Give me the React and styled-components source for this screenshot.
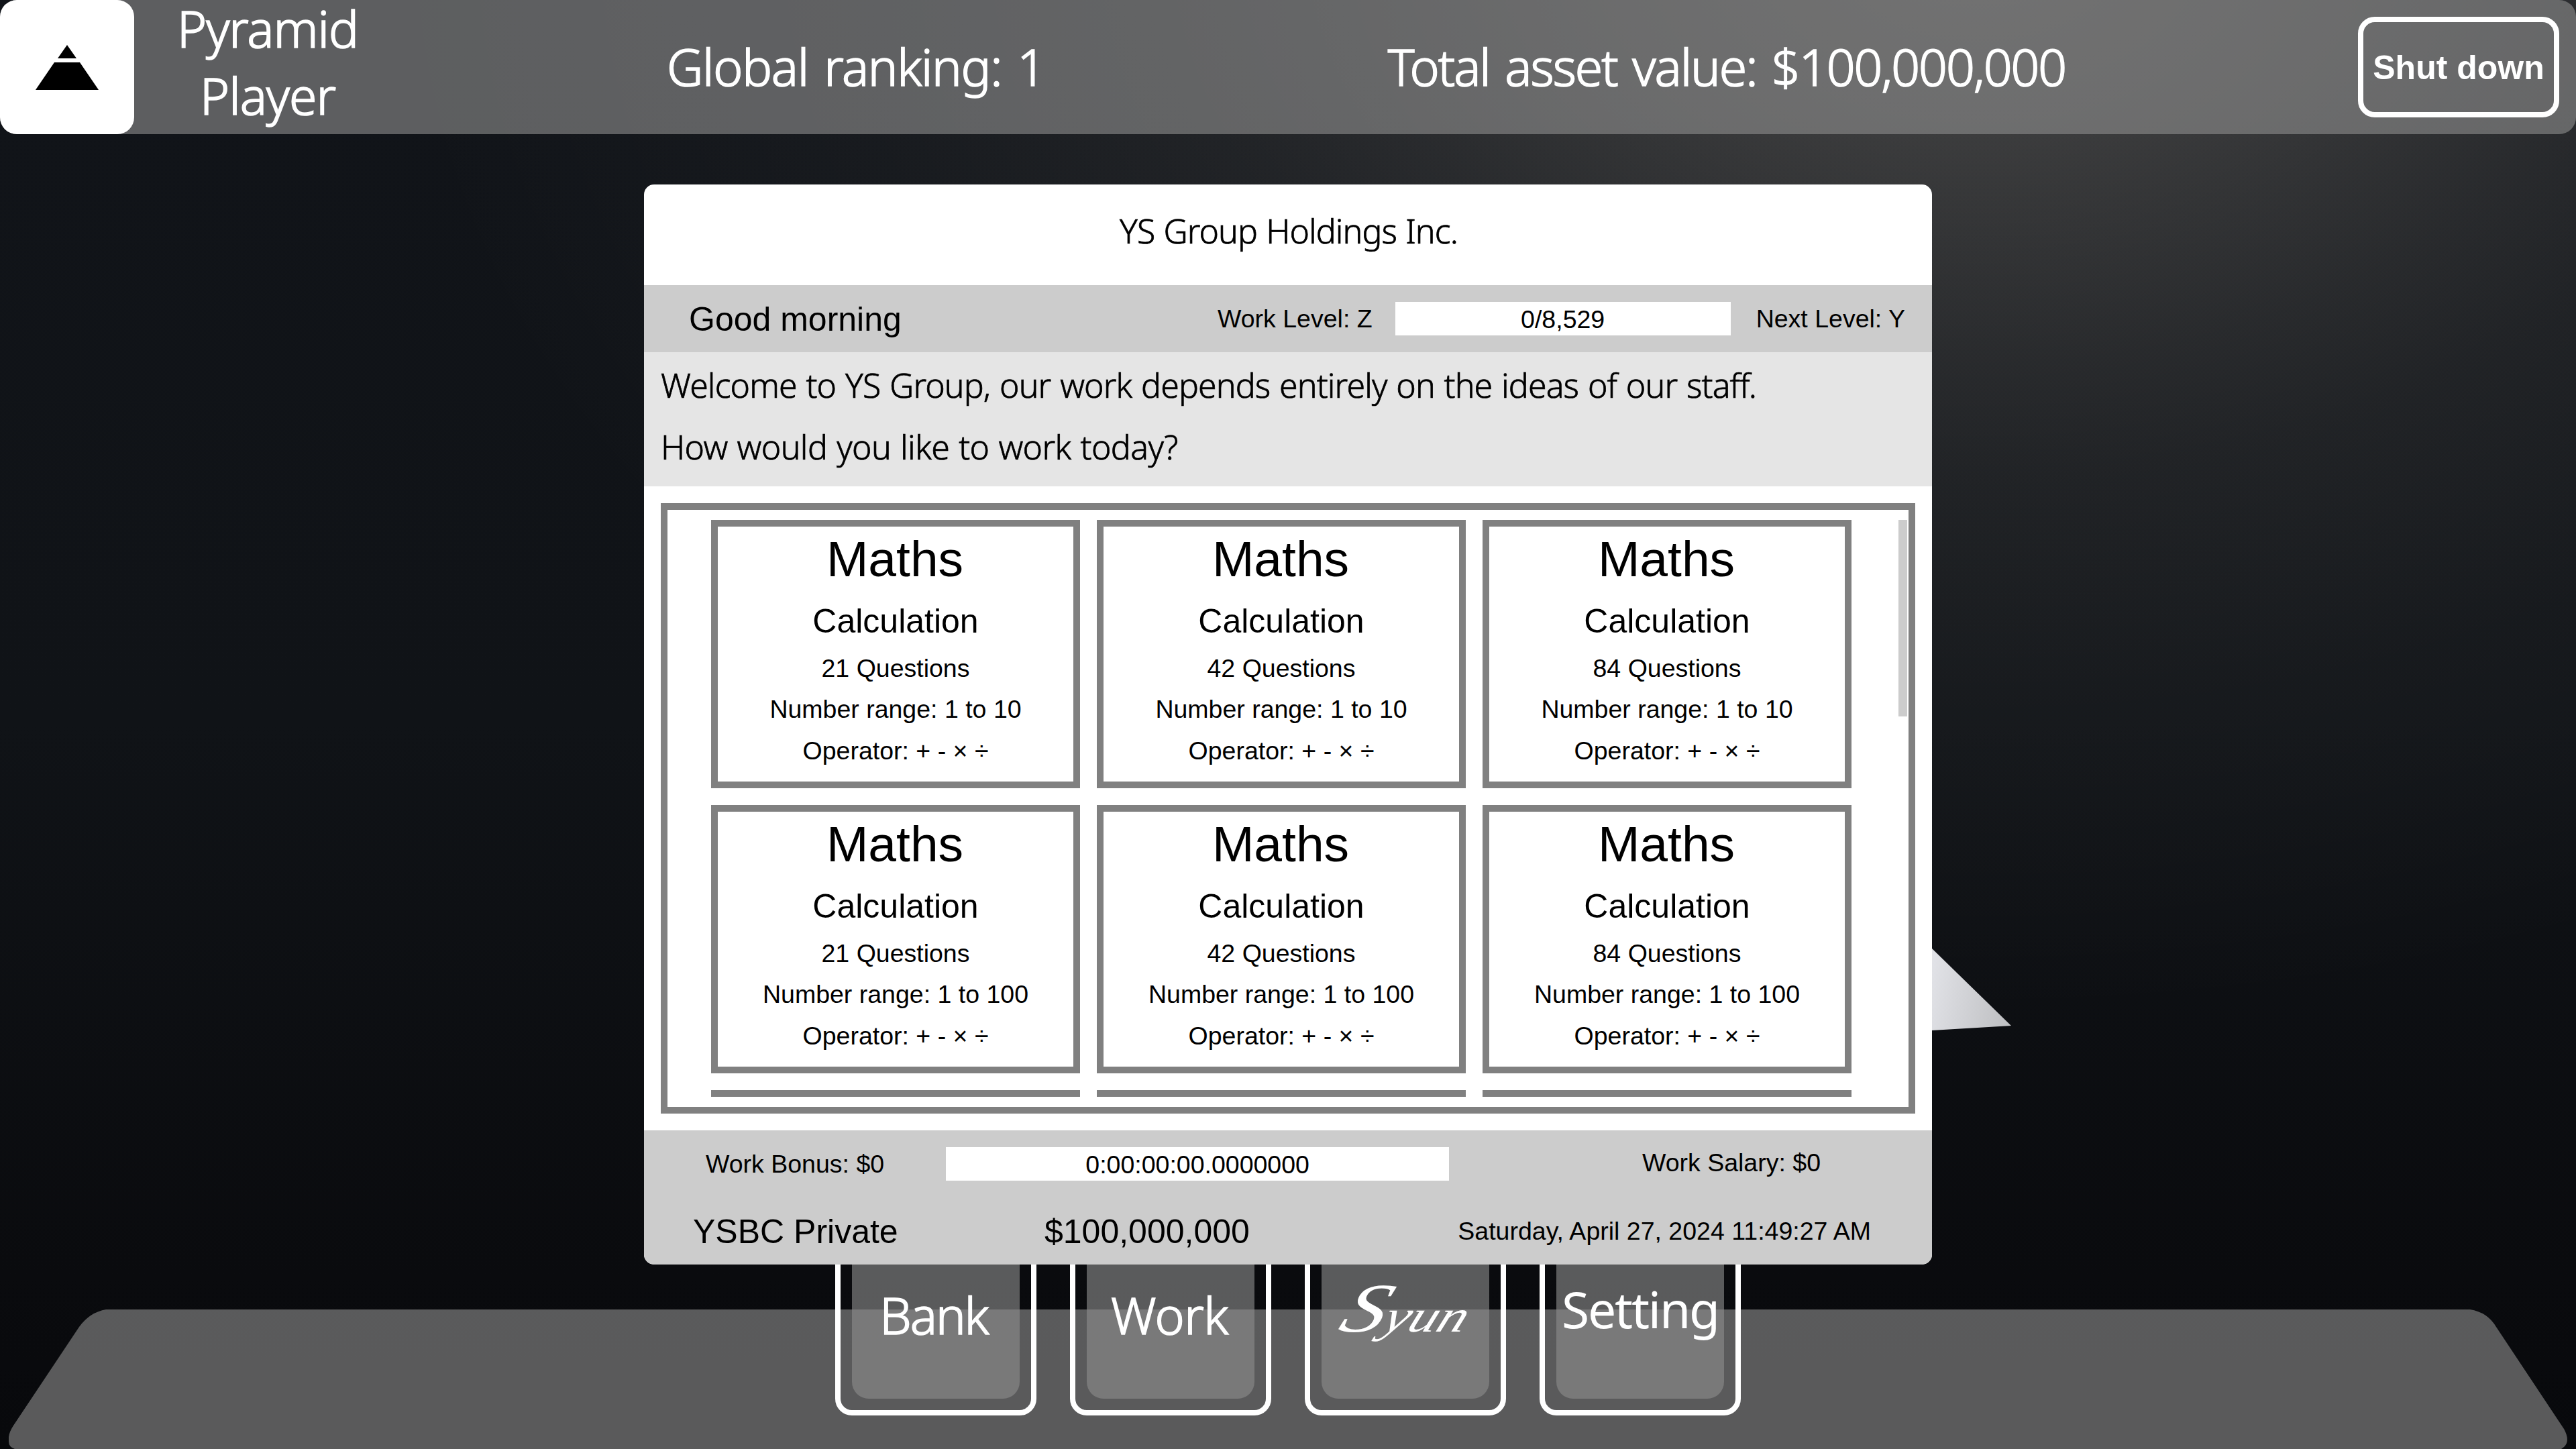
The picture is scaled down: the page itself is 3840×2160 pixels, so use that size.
import React from 'react';
import styled, { createGlobalStyle } from 'styled-components';

const GlobalStyle = createGlobalStyle`
  * {
    box-sizing: border-box;
  }

  body {
    margin: 0;
    overflow: hidden;
    background: #0b0d10;
  }
`;

const sans = '"Liberation Sans", Arial, sans-serif';
const ui = '"Noto Sans", "Open Sans", sans-serif';
const glass = 'rgba(141, 141, 141, 0.62)';

// Desktop
const Desktop = styled.div`
  position: relative;
  display: flex;
  flex-direction: column;
  width: 3840px;
  height: 2160px;
  overflow: hidden;
  font-family: ${sans};
  color: #000;
  background:
    radial-gradient(
      ellipse 2200px 1500px at 2950px -100px,
      rgba(255, 244, 228, 0.23) 0%,
      rgba(255, 244, 228, 0.18) 20%,
      rgba(255, 244, 228, 0.1) 43%,
      rgba(255, 244, 228, 0.07) 54%,
      rgba(255, 244, 228, 0.03) 77%,
      rgba(255, 244, 228, 0) 108%
    ),
    linear-gradient(180deg, #111419 0%, #101317 50%, #0a0b0e 88%, #08090c 100%);
`;

const TopBar = styled.header`
  display: flex;
  align-items: center;
  flex-shrink: 0;
  height: 200px;
  padding-right: 25px;
  border-radius: 25px;
  background: ${glass};
  color: #fff;
  font-family: ${ui};
  font-size: 75px;
  font-weight: 300;
  line-height: 100px;
  text-align: center;
  white-space: nowrap;
  -webkit-text-stroke: 1.6px #fff;
`;

const Logo = styled.div`
  width: 200px;
  height: 200px;
  border-radius: 25px;
  background: #fff;
`;

const PlayerName = styled.div`
  width: 398px;
  padding: 0 60px 17px;
  letter-spacing: -1px;
  white-space: normal;
`;

const Stat = styled.div`
  width: ${props => props.$width}px;
  padding-bottom: 3px;
  letter-spacing: ${props => props.$spacing}px;
  word-spacing: 5px;
`;

const ShutDown = styled.button`
  width: 300px;
  height: 150px;
  margin-left: auto;
  padding: 2px 0 0;
  border: 8px solid #fff;
  border-radius: 25px;
  background: transparent;
  color: #fff;
  font: bold 50px ${sans};
  -webkit-text-stroke: 0;
`;

// Window
const Window = styled.main`
  position: relative;
  z-index: 2;
  display: flex;
  flex-direction: column;
  flex-shrink: 0;
  width: 1920px;
  height: 1610px;
  margin: 75px auto 0;
  border-radius: 15px;
  overflow: hidden;
  background: #fff;
`;

const Title = styled.h1`
  height: 150px;
  margin: 0;
  padding-left: 2px;
  font: 300 50px/138px ${ui};
  letter-spacing: -0.9px;
  word-spacing: 1px;
  text-align: center;
  -webkit-text-stroke: 0.7px #000;
`;

const LevelRow = styled.div`
  display: flex;
  align-items: center;
  height: 100px;
  padding: 0 40px 0 67px;
  background: #ccc;
  font-size: 37.5px;
`;

const Greeting = styled.div`
  flex: 1;
  padding-top: 2px;
  font-size: 50px;
`;

const Meter = styled.div`
  width: ${props => props.$width}px;
  height: 50px;
  margin: ${props => props.$margin};
  background: #fff;
  font-size: 37.5px;
  line-height: 52px;
  text-align: center;
`;

const Message = styled.div`
  height: 200px;
  padding: 4px 25px;
  background: #e5e5e5;
  font: 300 50px/91.5px ${ui};
  -webkit-text-stroke: 0.7px #000;
`;

const MessageLine = styled.div`
  letter-spacing: ${props => props.$spacing}px;
  word-spacing: 1.6px;
`;

const JobFrame = styled.div`
  display: flex;
  justify-content: space-between;
  height: 910px;
  margin: 25px;
  padding: 15px 2px 15px 65px;
  border: 10px solid #808080;
`;

const JobGrid = styled.div`
  display: grid;
  grid-template-columns: repeat(3, 550px);
  grid-auto-rows: 400px;
  gap: 25px;
  height: 860px;
  overflow: hidden;
`;

const ScrollThumb = styled.div`
  width: 13px;
  height: 293px;
  background: #ccc;
`;

const JobCard = styled.div`
  border: 10px solid #808080;
  font-size: 37.5px;
  line-height: 61.3px;
  text-align: center;
`;

const Subject = styled.div`
  padding-right: 2px;
  font-size: 75px;
  line-height: 97px;
`;

const Topic = styled.div`
  font-size: 50px;
  line-height: 88px;
  margin-bottom: -4px;
`;

const Footer = styled.footer`
  height: 200px;
  background: #ccc;
`;

const FooterRow = styled.div`
  display: flex;
  align-items: center;
  height: 100px;
  padding: 0 ${props => props.$right}px 0 ${props => props.$left}px;
  font-size: 37.5px;
`;

const Big = styled.span`
  width: ${props => props.$width}px;
  padding-top: 1px;
  font-size: 50px;
`;

const Push = styled.span`
  margin-left: auto;
  padding-bottom: ${props => props.$lift || 0}px;
`;

// The white pyramid behind the window
const Pyramid = styled.svg`
  position: absolute;
  left: 2870px;
  top: 1390px;
  z-index: 1;
`;

// Dock
const Dock = styled.nav`
  position: absolute;
  left: 0;
  bottom: 0;
  z-index: 1;
  display: flex;
  justify-content: center;
  gap: 50px;
  width: 3840px;
  height: 350px;
`;

const DockShelf = styled.div`
  position: absolute;
  left: 0;
  bottom: 0;
  width: 3840px;
  height: 208px;
  background: ${glass};
  clip-path: path('M 158 0 L 3682 0 Q 3708 4 3721 26 L 3822 178 Q 3832 196 3822 205 L 3818 208 L 22 208 Q 13 205 13 197 L 13 190 Q 14 182 20 173 L 118 26 Q 134 4 158 0 Z');
`;

const DockButton = styled.div`
  position: relative;
  width: 300px;
  height: 300px;
  padding: 17px;
  border: 8px solid #fff;
  border-radius: 25px;
`;

const DockFace = styled.div`
  height: 250px;
  padding-right: ${props => props.$nudge || 0}px;
  border-radius: 25px;
  background: ${glass};
  color: #fff;
  font-family: ${ui};
  font-size: 75px;
  font-weight: ${props => props.$weight || 300};
  letter-spacing: ${props => props.$spacing || 0}px;
  line-height: ${props => props.$line || 250}px;
  text-align: center;
  -webkit-text-stroke: ${props => (props.$weight ? 0 : 1.6)}px #fff;
`;

const Script = styled.span`
  display: inline-block;
  padding-left: 4px;
  font-family: "Liberation Serif", cursive;
  font-size: 68px;
  font-style: italic;
  font-weight: 400;
  transform: scaleX(1.25) skewX(-18deg);
  -webkit-text-stroke: 0;

  &::first-letter {
    font-size: 104px;
  }
`;

const jobs = [
  { questions: 21, range: '1 to 10' },
  { questions: 42, range: '1 to 10' },
  { questions: 84, range: '1 to 10' },
  { questions: 21, range: '1 to 100' },
  { questions: 42, range: '1 to 100' },
  { questions: 84, range: '1 to 100' },
];

function App() {
  return (
    <Desktop>
      <GlobalStyle />
      <TopBar>
        <Logo>
          <svg width="200" height="200" viewBox="0 0 200 200">
            <path d="M100 67 L114 87 H86 Z M81 93 H119 L147 134 H53 Z" fill="#000" />
          </svg>
        </Logo>
        <PlayerName>Pyramid Player</PlayerName>
        <Stat $width={1356} $spacing={-1.3}>Global ranking: 1</Stat>
        <Stat $width={1240} $spacing={-2}>Total asset value: $100,000,000</Stat>
        <ShutDown>Shut down</ShutDown>
      </TopBar>

      <Window>
        <Title>YS Group Holdings Inc.</Title>
        <LevelRow>
          <Greeting>Good morning</Greeting>
          <span>Work Level: Z</span>
          <Meter $width={500} $margin="0 38px 0 34px">0/8,529</Meter>
          <span>Next Level: Y</span>
        </LevelRow>
        <Message>
          <MessageLine $spacing={-0.87}>
            Welcome to YS Group, our work depends entirely on the ideas of our staff.
          </MessageLine>
          <MessageLine $spacing={-0.62}>How would you like to work today?</MessageLine>
        </Message>
        <JobFrame>
          <JobGrid>
            {jobs.map((job, i) => (
              <JobCard key={i}>
                <Subject>Maths</Subject>
                <Topic>Calculation</Topic>
                <div>{job.questions} Questions</div>
                <div>Number range: {job.range}</div>
                <div>Operator: + - × ÷</div>
              </JobCard>
            ))}
            {/* next row, scrolled out below its top border */}
            <JobCard />
            <JobCard />
            <JobCard />
          </JobGrid>
          <ScrollThumb />
        </JobFrame>
        <Footer>
          <FooterRow $left={92} $right={166}>
            <span>Work Bonus: $0</span>
            <Meter $width={750} $margin="0 0 0 92px">0:00:00:00.0000000</Meter>
            <Push $lift={4}>Work Salary: $0</Push>
          </FooterRow>
          <FooterRow $left={73} $right={91}>
            <Big $width={524}>YSBC Private</Big>
            <Big>$100,000,000</Big>
            <Push>Saturday, April 27, 2024 11:49:27 AM</Push>
          </FooterRow>
        </Footer>
      </Window>

      <Pyramid width="140" height="160" viewBox="0 0 140 160">
        <defs>
          <linearGradient id="side" x1="0" y1="0" x2="1" y2="0.2">
            <stop offset="0" stopColor="#e6e7ec" />
            <stop offset="1" stopColor="#c2c3c6" />
          </linearGradient>
        </defs>
        <path d="M0 8 L10 24 L128 139 L10 146 L0 147 Z" fill="url(#side)" />
      </Pyramid>

      <Dock>
        <DockShelf />
        <DockButton><DockFace $nudge={6} $spacing={-2}>Bank</DockFace></DockButton>
        <DockButton><DockFace $nudge={3} $spacing={-0.5}>Work</DockFace></DockButton>
        <DockButton><DockFace $line={230}><Script>Syun</Script></DockFace></DockButton>
        <DockButton><DockFace $weight={400} $spacing={-2.2} $line={232}>Setting</DockFace></DockButton>
      </Dock>
    </Desktop>
  );
}

export default App;
